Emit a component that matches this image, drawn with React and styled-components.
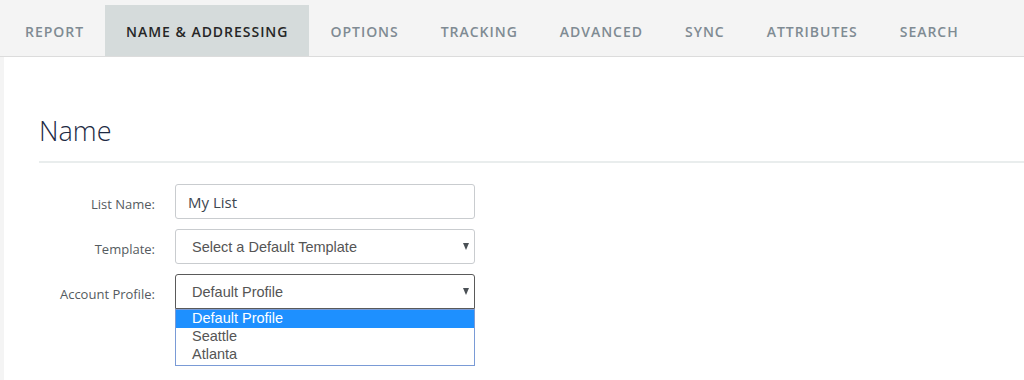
import React from "react";
import styled, { createGlobalStyle } from "styled-components";

const GlobalStyle = createGlobalStyle`
  html, body {
    margin: 0;
    padding: 0;
    background: #f4f4f4;
  }
  * { box-sizing: border-box; }
`;

const tabs = [
  "REPORT",
  "NAME & ADDRESSING",
  "OPTIONS",
  "TRACKING",
  "ADVANCED",
  "SYNC",
  "ATTRIBUTES",
  "SEARCH",
];

const Page = styled.div`
  width: 1024px;
  height: 380px;
  display: flex;
  flex-direction: column;
  overflow: hidden;
`;

const TabBar = styled.nav`
  height: 57px;
  display: flex;
  align-items: flex-end;
  padding-left: 4px;
  border-bottom: 1px solid #dcdcdc;
`;

const Tab = styled.div`
  height: 51px;
  padding: 2px 21px 0;
  display: flex;
  align-items: center;
  font-family: "Open Sans", sans-serif;
  font-weight: 600;
  font-size: 14px;
  letter-spacing: 0.97px;
  color: ${(p) => (p.$active ? "#262626" : "#7f8b93")};
  background: ${(p) => (p.$active ? "#d5dbdb" : "transparent")};
  white-space: nowrap;
`;

const Content = styled.main`
  flex: 1;
  margin-left: 4px;
  background: #ffffff;
  padding: 55px 0 0 35px;
`;

const Heading = styled.h2`
  margin: 0;
  font-family: "Open Sans", sans-serif;
  font-weight: 300;
  font-size: 27px;
  line-height: 38px;
  color: #1d2a44;
  padding-bottom: 11px;
  border-bottom: 2px solid #e9eded;
`;

const Form = styled.div`
  display: flex;
  flex-direction: column;
  gap: 10px;
  padding-top: 21px;
`;

const Row = styled.div`
  display: grid;
  grid-template-columns: 116px 300px;
  column-gap: 20px;
  align-items: center;
`;

const Label = styled.label`
  text-align: right;
  font-family: "Open Sans", sans-serif;
  font-size: 13px;
  color: #555b60;
  padding-top: 4px;
`;

const TextInput = styled.div`
  height: 35px;
  border: 1px solid #c9cccf;
  border-radius: 3px;
  padding: 0 12px;
  display: flex;
  align-items: center;
  font-family: "Open Sans", sans-serif;
  font-size: 15px;
  color: #3d4650;
`;

const SelectBox = styled.div`
  position: relative;
  height: 35px;
  border: 1px solid ${(p) => (p.$open ? "#5a5a5a" : "#c9cccf")};
  border-radius: ${(p) => (p.$open ? "3px 3px 0 0" : "3px")};
  padding: 0 16px;
  display: flex;
  align-items: center;
  font-family: "Liberation Sans", Arial, sans-serif;
  font-size: 14.5px;
  color: #555;
`;

const Arrow = styled.span`
  position: absolute;
  right: 5px;
  top: 13px;
  width: 0;
  height: 0;
  border-left: 3.5px solid transparent;
  border-right: 3.5px solid transparent;
  border-top: 7px solid #4a5055;
`;

const OptionList = styled.ul`
  position: absolute;
  left: -1px;
  right: -1px;
  top: 34px;
  margin: 0;
  padding: 0 0 1px;
  list-style: none;
  background: #fff;
  border: 1px solid #7a9bd6;
  z-index: 2;
`;

const Option = styled.li`
  height: 18px;
  line-height: 17px;
  padding-left: 16px;
  font-family: "Liberation Sans", Arial, sans-serif;
  font-size: 14.5px;
  color: ${(p) => (p.$selected ? "#fff" : "#555")};
  background: ${(p) => (p.$selected ? "#1e90ff" : "transparent")};
`;

export default function App() {
  return (
    <>
      <GlobalStyle />
      <Page>
        <TabBar>
          {tabs.map((t) => (
            <Tab key={t} $active={t === "NAME & ADDRESSING"}>
              {t}
            </Tab>
          ))}
        </TabBar>
        <Content>
          <Heading>Name</Heading>
          <Form>
            <Row>
              <Label>List Name:</Label>
              <TextInput>My List</TextInput>
            </Row>
            <Row>
              <Label>Template:</Label>
              <SelectBox>
                Select a Default Template
                <Arrow />
              </SelectBox>
            </Row>
            <Row>
              <Label>Account Profile:</Label>
              <SelectBox $open>
                Default Profile
                <Arrow />
                <OptionList>
                  <Option $selected>Default Profile</Option>
                  <Option>Seattle</Option>
                  <Option>Atlanta</Option>
                </OptionList>
              </SelectBox>
            </Row>
          </Form>
        </Content>
      </Page>
    </>
  );
}
